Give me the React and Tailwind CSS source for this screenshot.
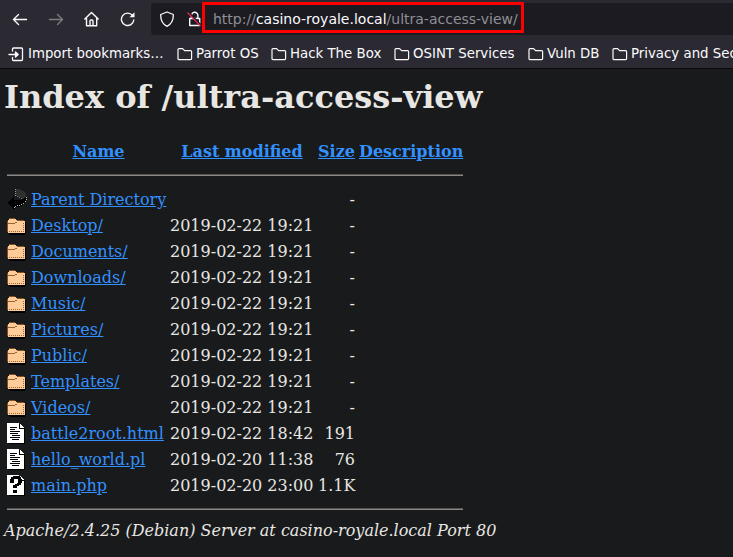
import React from "react";

const rows = [
  ["back", "Parent Directory", "", "-"],
  ["folder", "Desktop/", "2019-02-22 19:21", "-"],
  ["folder", "Documents/", "2019-02-22 19:21", "-"],
  ["folder", "Downloads/", "2019-02-22 19:21", "-"],
  ["folder", "Music/", "2019-02-22 19:21", "-"],
  ["folder", "Pictures/", "2019-02-22 19:21", "-"],
  ["folder", "Public/", "2019-02-22 19:21", "-"],
  ["folder", "Templates/", "2019-02-22 19:21", "-"],
  ["folder", "Videos/", "2019-02-22 19:21", "-"],
  ["text", "battle2root.html", "2019-02-22 18:42", "191"],
  ["text", "hello_world.pl", "2019-02-20 11:38", "76"],
  ["unknown", "main.php", "2019-02-20 23:00", "1.1K"],
];

function FileIcon({ kind }) {
  return (
    <svg width="20" height="22" viewBox="0 0 20 22" shapeRendering="crispEdges">
      {kind === "back" && (
        <>
          <path d="M9 0h3l4 2 3 3v4l-3 1-3-2-4-1z" fill="#303030" />
          <path d="M0 14l7-6v3h6l3-1 3-3v5l-3 4-4 2H8v2H6z" fill="#000" />
          <path d="M8.500 0v8" stroke="#999" strokeDasharray="1 1" fill="none" />
          <path d="M19 8h1v1h-1zM19 10h1v1h-1zM18 12h1v1h-1zM16 14h1v1h-1zM14 15h1v1h-1zM12 16h1v1h-1zM10 16h1v1h-1zM8 17h1v1h-1zM7 18h1v1h-1z" fill="#bbb" />
          <path d="M10 7h1v1h-1zM12 8h1v1h-1zM14 9h1v1h-1z" fill="#777" />
        </>
      )}
      {kind === "folder" && (
        <>
          <path d="M2 4h6l2 2h7l2 2v10l-2 2H3l-2-2z" fill="#000" />
          <path d="M2 4h6l2 2h7l1 1v10l-1 1H1l-1-1V6z" fill="#ffcc99" />
          <path d="M1 8.500h7M8 7.500h2" stroke="#996633" fill="none" />
          <path d="M2 16.500h15M16.500 8v9" stroke="#996633" strokeDasharray="1 1" fill="none" />
          <path d="M2 3.500h6M10 5.500h7M0.500 6v11" stroke="#805020" fill="none" />
        </>
      )}
      {(kind === "text" || kind === "unknown") && (
        <>
          <path d="M2 1h11l5 5v15H2z" fill="#000" />
          <path d="M0 0h12v6h5v14H0z" fill="#fff" />
          <path d="M13 1h1v1h1v1h1v1h1v1h-4z" fill="#fff" />
        </>
      )}
      {kind === "text" && (
        <path d="M3 4.500h7M3 6.500h5M3 8.500h10M3 10.500h8M5 12.500h8M3 14.500h10M5 16.500h7" stroke="#000" />
      )}
      {kind === "unknown" && (
        <path d="M4 2h2V1h6v1h2v2h1v4h-1v2h-2v1h-2v2H6v-3h2V9h2V8h1V4H7v4H3V4h1zM6 15h4v3H6z" fill="#000" />
      )}
    </svg>
  );
}

function Folder() {
  return (
    <svg className="shrink-0" width="16" height="16" viewBox="0 0 16 16" fill="none" stroke="#fbfbfe" strokeWidth="1.2" strokeLinejoin="round">
      <path d="M1 12.600v-9q0-1 1-1h3.600l2 2h6q1 0 1 1v7q0 1-1 1H2q-1 0-1-1z" />
    </svg>
  );
}

const marks = [
  ["Parrot OS", "w-[94px]"],
  ["Hack The Box", "w-[123px]"],
  ["OSINT Services", "w-[134px]"],
  ["Vuln DB", "w-[84px]"],
  ["Privacy and Sec", "w-[121px]"],
];

function Link({ children }) {
  return <a className="text-[#3391ff] underline">{children}</a>;
}

const grid = "grid grid-cols-[20px_135px_144px_37px_104px] gap-x-1 items-center";

export default function App() {
  return (
    <div className="flex h-[557px] w-[733px] flex-col overflow-hidden bg-[#181a1b] font-['DejaVu_Serif',serif] text-base text-[#e8e6e3]">
      <header className="h-[69px] shrink-0 border-b border-[#0c0c0d] bg-[#2b2a33] font-['DejaVu_Sans',sans-serif] text-[#fbfbfe]">
        <div className="flex h-[38px] pt-[3px]">
          <div className="flex w-[151px] items-center gap-5 pl-3 pb-[3px]">
            <svg className="shrink-0" width="16" height="16" viewBox="0 0 16 16" fill="none" stroke="#fbfbfe" strokeWidth="1.4" strokeLinecap="round" strokeLinejoin="round"><path d="M14.500 8.500H1.500M6.500 3.500l-5 5 5 5" /></svg>
            <svg className="shrink-0" width="16" height="16" viewBox="0 0 16 16" fill="none" stroke="#7c7b82" strokeWidth="1.4" strokeLinecap="round" strokeLinejoin="round"><path d="M1.500 8.500h13M9.500 3.500l5 5-5 5" /></svg>
            <svg className="shrink-0" width="16" height="16" viewBox="0 0 16 16" fill="none" stroke="#fbfbfe" strokeWidth="1.4" strokeLinecap="round" strokeLinejoin="round"><path d="M.8 8l6.700-6.500L14.200 8M2.500 7v7.700h10.200V7M6 14.500V10q0-1 1-1h1q1 0 1 1v4.500" /></svg>
            <svg className="shrink-0" width="16" height="16" viewBox="0 0 16 16" fill="none" stroke="#fbfbfe" strokeWidth="1.4" strokeLinecap="round"><path d="M12.500 4.500A6.200 6.200 0 1 0 13.800 9" /><path d="M14.500 1.200v5H9.500z" fill="#fbfbfe" stroke="none" /></svg>
          </div>
          <div className="flex h-8 flex-1 items-center rounded-l bg-[#1c1b22] pl-2">
            <svg width="16" height="16" viewBox="0 0 16 16" fill="none" stroke="#fbfbfe" strokeWidth="1.3" strokeLinejoin="round"><path d="M8 1l6.300 2.500c.2 5-1.300 9.500-6.300 11.800C3 13 1.500 8.500 1.700 3.500z" /></svg>
            <svg className="ml-3" width="16" height="16" viewBox="0 0 16 16" fill="none"><path d="M4.500 7V4.500a3.200 3.200 0 0 1 6.400 0V7M2.700 7.500h10v7h-10z" stroke="#fbfbfe" strokeWidth="1.4" strokeLinejoin="round" /><path d="M1.500 1l13 13.500" stroke="#1c1b22" strokeWidth="1.500" /><path d="M.5 1.500l13 13.500" stroke="#e22850" strokeWidth="1.2" /></svg>
            <div className="-mt-[3px] -ml-px flex h-[31px] w-[322px] items-center border-[3px] border-[#fe0000] pt-[3px] pl-2 text-sm whitespace-nowrap text-[#8f8f94]">
              <span>http://<span className="text-[#fbfbfe]">casino-royale.local</span>/ultra-access-view/</span>
            </div>
          </div>
        </div>
        <div className="flex h-[30px] items-center pt-0.5 pl-2 text-[13.333px] whitespace-nowrap">
          <div className="flex w-[169px] shrink-0 items-center gap-1">
            <svg width="16" height="16" viewBox="0 0 16 16" fill="none" stroke="#fbfbfe" strokeWidth="1.3" strokeLinecap="round" strokeLinejoin="round"><path d="M1 8.500h8M4.500 5V3q0-1 1-1h8q1 0 1 1v10.500q0 1-1 1h-8q-1 0-1-1v-2" /><path d="M7.500 6l2.700 2.500-2.700 2.500z" fill="#fbfbfe" /></svg>
            <span>Import bookmarks…</span>
          </div>
          {marks.map(([name, width]) => (
            <div key={name} className={`flex shrink-0 items-center gap-[3px] ${width}`}>
              <Folder />
              <span>{name}</span>
            </div>
          ))}
        </div>
      </header>
      <main className="whitespace-nowrap">
        <h1 className="mt-[9px] pl-1 text-[32px] leading-[38px] font-bold">Index of /ultra-access-view</h1>
        <div className="w-[463px] pl-[7px]">
          <div className={`${grid} mt-[23px] h-[26px] text-center font-bold`}>
            <span />
            <Link>Name</Link>
            <Link>Last modified</Link>
            <Link>Size</Link>
            <Link>Description</Link>
          </div>
          <div className="mt-[9px] mb-[10px] h-[2px] border-t border-[#545351] bg-[#8a8988]" />
          {rows.map(([kind, name, date, size]) => (
            <div key={name} className={`${grid} h-[26px] pt-0.5`}>
              <FileIcon kind={kind} />
              <Link>{name}</Link>
              <span>{date}</span>
              <span className="text-right">{size}</span>
            </div>
          ))}
          <div className="mt-[10px] h-[2px] border-t border-[#545351] bg-[#8a8988]" />
        </div>
        <address className="mt-[9px] pl-1">Apache/2.4.25 (Debian) Server at casino-royale.local Port 80</address>
      </main>
    </div>
  );
}
